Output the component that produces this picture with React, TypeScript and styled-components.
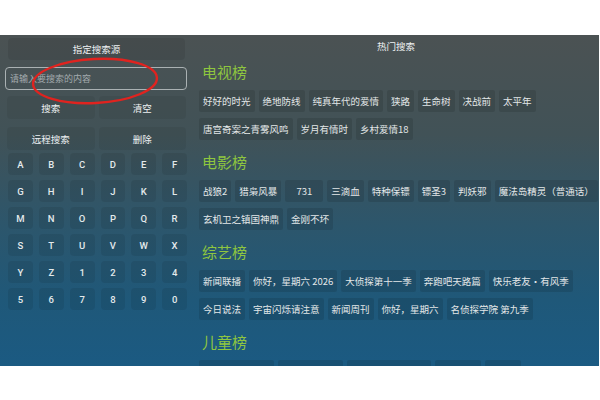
import React from 'react';
import styled, {createGlobalStyle} from 'styled-components';

const GlobalStyle = createGlobalStyle`
  html, body {
    margin: 0;
    padding: 0;
    background: #ffffff;
  }
  body {
    font-family: "Noto Sans CJK SC", "Noto Sans", Roboto, sans-serif;
  }
`;

const Page = styled.div`
  width: 600px;
  height: 400px;
  padding-top: 35px;
  box-sizing: border-box;
`;

const Panel = styled.div`
  height: 331px;
  width: 599px;
  overflow: hidden;
  display: grid;
  grid-template-columns: 182px 1fr;
  column-gap: 10px;
  padding-left: 5px;
  box-sizing: border-box;
  background: linear-gradient(180deg, #4b5253 0%, #415257 30%, #2c566c 58%, #1f5879 80%, #1b5a82 100%);
  color: #e6eaeb;
`;

const LeftColumn = styled.div`
  position: relative;
  display: flex;
  flex-direction: column;
  padding-top: 3px;
`;

const SourceButton = styled.div`
  height: 22px;
  margin: 0 2px 0 3px;
  border-radius: 4px;
  background: rgba(0, 0, 0, 0.08);
  display: flex;
  align-items: center;
  justify-content: center;
  font-size: 9.5px;
  color: #eef1f2;
`;

const SearchInput = styled.input`
  margin-top: 7px;
  height: 23px;
  box-sizing: border-box;
  border: 1px solid #aab1b3;
  border-radius: 4px;
  background: transparent;
  padding: 0 4px;
  font-family: inherit;
  font-size: 9px;
  color: #fff;
  outline: none;
  &::placeholder {
    color: #a3aaad;
  }
`;

const ButtonRow = styled.div<{$top: number}>`
  margin-top: ${p => p.$top}px;
  display: grid;
  grid-template-columns: 1fr 1fr;
  column-gap: 4px;
  padding: 0 1px 0 2px;
`;

const ActionButton = styled.div`
  height: 23px;
  border-radius: 4px;
  background: rgba(0, 0, 0, 0.06);
  display: flex;
  align-items: center;
  justify-content: center;
  font-size: 9.5px;
  color: #eef1f2;
`;

const KeyGrid = styled.div`
  margin-top: 3px;
  padding-left: 3px;
  display: grid;
  grid-template-columns: repeat(6, 1fr);
  column-gap: 6px;
  row-gap: 5px;
`;

const Key = styled.div`
  height: 22px;
  border-radius: 4px;
  background: rgba(0, 0, 0, 0.08);
  display: flex;
  align-items: center;
  justify-content: center;
  font-family: Roboto, "Noto Sans", sans-serif;
  font-weight: 500;
  font-size: 9.5px;
  color: #e4eaec;
`;

const Annotation = styled.svg`
  position: absolute;
  left: 0;
  top: 0;
  pointer-events: none;
`;

const RightColumn = styled.div`
  padding-left: 2px;
  display: flex;
  flex-direction: column;
`;

const Header = styled.div`
  height: 22px;
  line-height: 22px;
  text-align: center;
  font-size: 9.5px;
  color: #eef1f2;
  padding-right: 6px;
`;

const Section = styled.section<{$first?: boolean}>`
  display: flex;
  flex-direction: column;
  gap: 6px;
  margin-top: ${p => (p.$first ? '3px' : '10px')};
`;

const SectionTitle = styled.div`
  height: 24px;
  line-height: 24px;
  padding-left: 3px;
  font-size: 15px;
  color: #8ec63f;
`;

const TagRow = styled.div`
  display: flex;
  gap: 4px;
  white-space: nowrap;
`;

const Tag = styled.div<{$wide?: boolean}>`
  height: 22px;
  min-width: ${p => (p.$wide ? '38px' : '0')};
  padding: 0 4px;
  box-sizing: border-box;
  border-radius: 2px;
  background: rgba(0, 0, 0, 0.11);
  display: flex;
  align-items: center;
  justify-content: center;
  font-size: 9.5px;
  color: #e3e7e8;
`;

const keys = [
  'A', 'B', 'C', 'D', 'E', 'F',
  'G', 'H', 'I', 'J', 'K', 'L',
  'M', 'N', 'O', 'P', 'Q', 'R',
  'S', 'T', 'U', 'V', 'W', 'X',
  'Y', 'Z', '1', '2', '3', '4',
  '5', '6', '7', '8', '9', '0',
];

const sections = [
  {
    title: '电视榜',
    rows: [
      ['好好的时光', '绝地防线', '纯真年代的爱情', '狭路', '生命树', '决战前', '太平年'],
      ['唐宫奇案之青雾风鸣', '岁月有情时', '乡村爱情18'],
    ],
  },
  {
    title: '电影榜',
    rows: [
      ['战狼2', '猎枭风暴', '731', '三滴血', '特种保镖', '镖圣3', '判妖邪', '魔法岛精灵（普通话）'],
      ['玄机卫之镇国神鼎', '金刚不坏'],
    ],
  },
  {
    title: '综艺榜',
    rows: [
      ['新闻联播', '你好，星期六 2026', '大侦探第十一季', '奔跑吧天路篇', '快乐老友·有风季'],
      ['今日说法', '宇宙闪烁请注意', '新闻周刊', '你好，星期六', '名侦探学院 第九季'],
    ],
  },
  {
    title: '儿童榜',
    rows: [['小猪佩奇第八季', '汪汪队立大功', '熊出没之探险日记', '超级飞侠', '喜羊羊']],
  },
];

export default function App() {
  return (
    <Page>
      <GlobalStyle />
      <Panel>
        <LeftColumn>
          <SourceButton>指定搜索源</SourceButton>
          <SearchInput placeholder="请输入要搜索的内容" />
          <ButtonRow $top={6}>
            <ActionButton>搜索</ActionButton>
            <ActionButton>清空</ActionButton>
          </ButtonRow>
          <ButtonRow $top={8}>
            <ActionButton>远程搜索</ActionButton>
            <ActionButton>删除</ActionButton>
          </ButtonRow>
          <KeyGrid>
            {keys.map(k => (
              <Key key={k}>{k}</Key>
            ))}
          </KeyGrid>
          <Annotation width="190" height="80" viewBox="0 0 190 80">
            <ellipse
              cx="90"
              cy="46"
              rx="62"
              ry="22"
              transform="rotate(-3 90 46)"
              fill="none"
              stroke="#e0231f"
              strokeWidth="2.4"
            />
          </Annotation>
        </LeftColumn>
        <RightColumn>
          <Header>热门搜索</Header>
          {sections.map((s, si) => (
            <Section key={s.title} $first={si === 0}>
              <SectionTitle>{s.title}</SectionTitle>
              {s.rows.map((row, i) => (
                <TagRow key={i}>
                  {row.map(t => (
                    <Tag key={t} $wide={t === '731'}>
                      {t}
                    </Tag>
                  ))}
                </TagRow>
              ))}
            </Section>
          ))}
        </RightColumn>
      </Panel>
    </Page>
  );
}
